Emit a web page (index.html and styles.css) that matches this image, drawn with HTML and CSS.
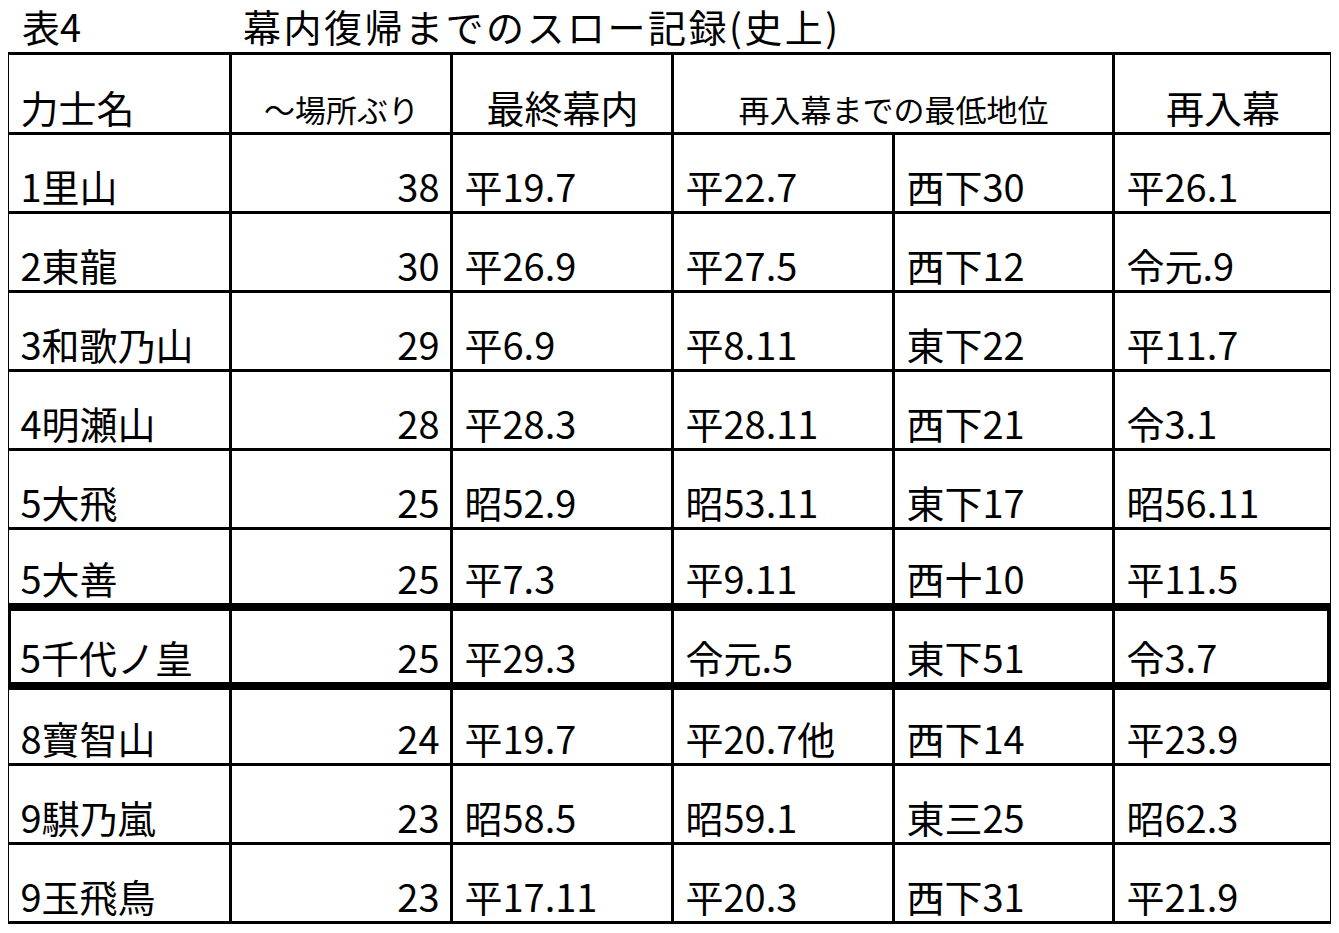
FILE: index.html
```html
<!DOCTYPE html>
<html lang="ja">
<head>
<meta charset="utf-8">
<title>表4 幕内復帰までのスロー記録(史上)</title>
<link rel="stylesheet" href="styles.css">
</head>
<body>
<div class="title">
  <span class="title-no">表4</span>
  <span class="title-text">幕内復帰までのスロー記録(史上)</span>
</div>
<table class="records">
  <colgroup>
    <col class="col-name">
    <col class="col-num">
    <col class="col-last">
    <col class="col-low1">
    <col class="col-low2">
    <col class="col-re">
  </colgroup>
  <thead>
    <tr class="head">
      <th class="left">力士名</th>
      <th class="small">～場所ぶり</th>
      <th>最終幕内</th>
      <th class="small" colspan="2">再入幕までの最低地位</th>
      <th>再入幕</th>
    </tr>
  </thead>
  <tbody>
    <tr><td>1里山</td><td class="num">38</td><td>平19.7</td><td>平22.7</td><td>西下30</td><td>平26.1</td></tr>
    <tr><td>2東龍</td><td class="num">30</td><td>平26.9</td><td>平27.5</td><td>西下12</td><td>令元.9</td></tr>
    <tr><td>3和歌乃山</td><td class="num">29</td><td>平6.9</td><td>平8.11</td><td>東下22</td><td>平11.7</td></tr>
    <tr><td>4明瀬山</td><td class="num">28</td><td>平28.3</td><td>平28.11</td><td>西下21</td><td>令3.1</td></tr>
    <tr><td>5大飛</td><td class="num">25</td><td>昭52.9</td><td>昭53.11</td><td>東下17</td><td>昭56.11</td></tr>
    <tr class="short"><td>5大善</td><td class="num">25</td><td>平7.3</td><td>平9.11</td><td>西十10</td><td>平11.5</td></tr>
    <tr class="hl"><td>5千代ノ皇</td><td class="num">25</td><td>平29.3</td><td>令元.5</td><td>東下51</td><td>令3.7</td></tr>
    <tr><td>8寶智山</td><td class="num">24</td><td>平19.7</td><td>平20.7他</td><td>西下14</td><td>平23.9</td></tr>
    <tr><td>9騏乃嵐</td><td class="num">23</td><td>昭58.5</td><td>昭59.1</td><td>東三25</td><td>昭62.3</td></tr>
    <tr><td>9玉飛鳥</td><td class="num">23</td><td>平17.11</td><td>平20.3</td><td>西下31</td><td>平21.9</td></tr>
  </tbody>
</table>
</body>
</html>
```
FILE: styles.css
```css
html, body {
  background: #ffffff;
}

body {
  margin: 8px;
  color: #000000;
  font-family: "Noto Sans CJK JP", "Noto Sans", sans-serif;
}

.title {
  display: flex;
  align-items: flex-end;
  height: 44px;
  padding-bottom: 7px;
  box-sizing: border-box;
  font-size: 38px;
  line-height: 1;
}

.title-no {
  width: 235px;
  padding-left: 14px;
  box-sizing: border-box;
}

.title-text {
  letter-spacing: 2.5px;
}

.records {
  border-collapse: collapse;
  table-layout: fixed;
  width: 1324px;
  margin-left: -5px;
  font-size: 38px;
  line-height: 1;
}

.col-name { width: 223px; }
.col-num { width: 221px; }
.col-last { width: 221px; }
.col-low1 { width: 221px; }
.col-low2 { width: 220px; }
.col-re { width: 218px; }

.records th,
.records td {
  border: 3px solid #000000;
  padding: 0 10px 6px 12px;
  vertical-align: bottom;
  white-space: nowrap;
  font-weight: 400;
  text-align: left;
}

.records tr {
  height: 79px;
}

.records tr.head {
  height: 80px;
}

.records tr.short {
  height: 78px;
}

.records th {
  text-align: center;
}

.records th.left {
  text-align: left;
}

.records th.small {
  font-size: 31px;
  padding-bottom: 8px;
}

.records td.num {
  text-align: right;
  padding-right: 10px;
}

.records tr.hl {
  border: 8px solid #000000;
}

.records tr.hl td:first-child {
  padding-left: 9px;
}
```
